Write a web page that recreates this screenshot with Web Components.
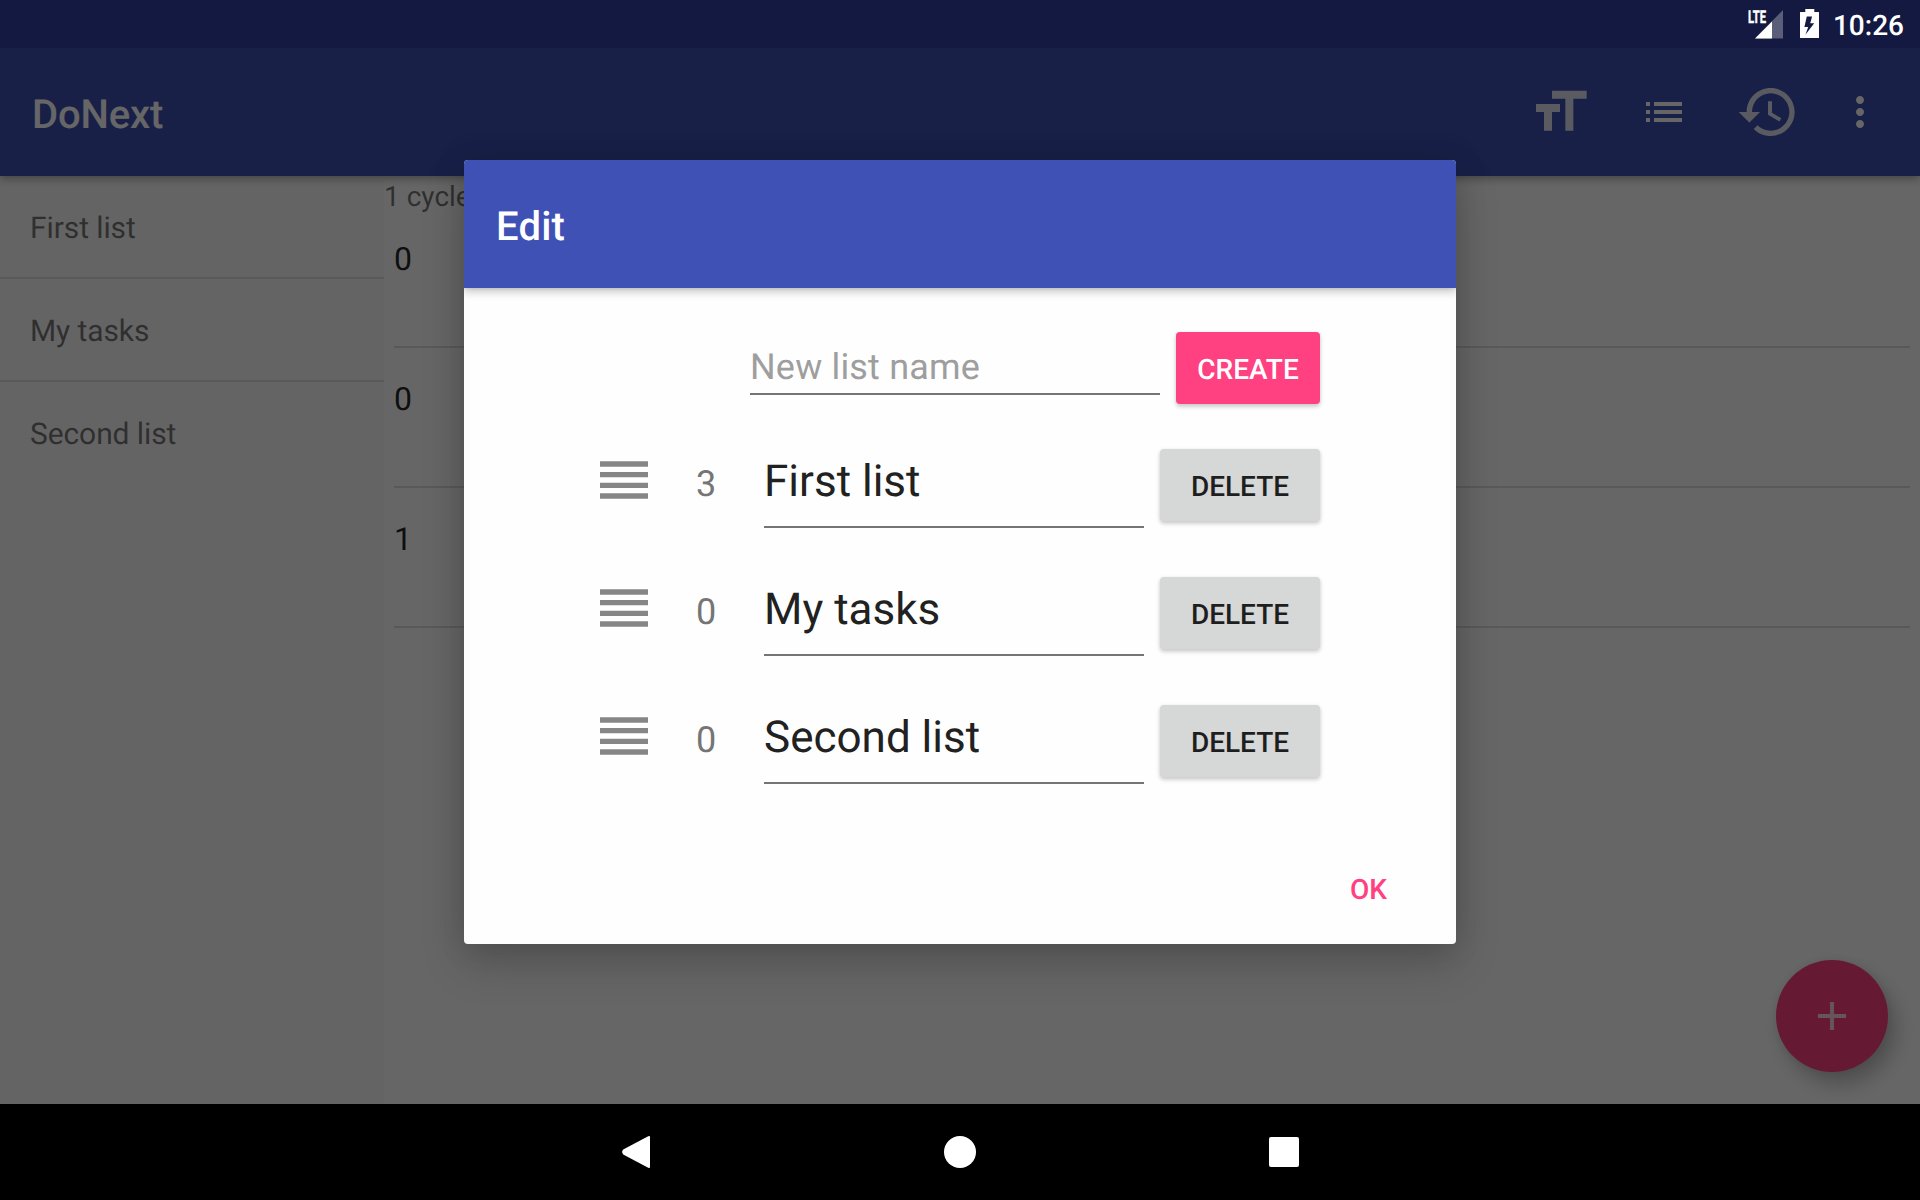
<!DOCTYPE html>
<html lang="en">
<head>
<meta charset="utf-8">
<title>DoNext</title>
<style>
html,body{margin:0;width:1920px;height:1200px;overflow:hidden;background:#000}
body{font-family:Roboto,"Noto Sans",sans-serif;text-rendering:geometricPrecision}
</style>
</head>
<body>
<donext-app></donext-app>
<script>
const define = (name, html) => {
  const template = document.createElement('template');
  template.innerHTML = html;
  customElements.define(name, class extends HTMLElement {
    constructor() {
      super();
      this.attachShadow({mode: 'open'}).append(template.content.cloneNode(true));
    }
  });
};

define('status-bar', `<style>
:host{display:flex;height:48px;box-sizing:border-box;justify-content:flex-end;align-items:flex-start;padding:0 16px 0 0;background:#131940;color:#fff}
svg{display:block;width:76px;height:48px;margin-right:13px}
span{font-size:28px;font-weight:500;line-height:48px;padding-top:2px}
</style>
<svg viewBox="0 0 76 48"><path d="M39 10v28.500H11z" fill="#fff" opacity=".3"/><path d="M28 21.500v17H11z" fill="#fff"/>
<text x="4" y="22.700" font-size="17.500" font-weight="700" fill="#fff" stroke="#fff" stroke-width=".5" textLength="18" lengthAdjust="spacingAndGlyphs">LTE</text>
<path fill="#fff" fill-rule="evenodd" d="M61.300 9h9v3H74.500a.5.5 0 0 1 .5.5v25a.5.5 0 0 1-.5.5h-18a.5.5 0 0 1-.5-.5v-25a.5.5 0 0 1 .5-.5h4.800zM62.800 16.500l-2.400 10.500h3.800L61.400 34.800l8.800-11.600h-4l1.900-6.700z"/></svg>
<span><slot></slot></span>`);

define('app-bar', `<style>
:host{display:flex;height:128px;box-sizing:border-box;align-items:center;padding:0 36px 0 32px;background:#3f51b5;color:#fff;position:relative;box-shadow:0 4px 8px rgba(0,0,0,.25),0 1px 3px rgba(0,0,0,.08);clip-path:inset(0 0 -20px 0)}
h1{margin:0;flex:1;font-size:40px;font-weight:500;line-height:47px;padding-top:5px;letter-spacing:-.15px}
svg{display:block;width:48px;height:48px;fill:#fff;margin-right:48px}
.big{width:64px;height:64px;opacity:.84}
.history{margin-right:36px}
.more{margin-right:0}
</style>
<h1><slot></slot></h1>
<svg class="big" viewBox="0 0 24 24"><path d="M9 4v3h5v12h3V7h5V4H9zm-6 8h3v7h3v-7h3V9H3v3z"/></svg>
<svg viewBox="0 0 24 24"><path d="M3 13h2v-2H3v2zm0 4h2v-2H3v2zm0-8h2V7H3v2zm4 4h14v-2H7v2zm0 4h14v-2H7v2zM7 7v2h14V7H7z"/></svg>
<svg class="big history" viewBox="0 0 24 24"><path d="M13 3c-4.970 0-9 4.030-9 9H1l3.890 3.890.070.140L9 12H6c0-3.870 3.130-7 7-7s7 3.130 7 7-3.130 7-7 7c-1.930 0-3.680-.790-4.940-2.060l-1.420 1.420C8.270 19.990 10.510 21 13 21c4.970 0 9-4.030 9-9s-4.030-9-9-9zm-1 5v5l4.280 2.540.720-1.210-3.500-2.080V8H12z"/></svg>
<svg class="more" viewBox="0 0 24 24"><path d="M12 8c1.100 0 2-.900 2-2s-.900-2-2-2-2 .900-2 2 .900 2 2 2zm0 2c-1.100 0-2 .900-2 2s.900 2 2 2 2-.900 2-2-.900-2-2-2zm0 6c-1.100 0-2 .900-2 2s.900 2 2 2 2-.900 2-2-.900-2-2-2z"/></svg>`);

define('side-item', `<style>
:host{display:block;height:101px;line-height:99px;padding:3px 0 0 30px;box-sizing:border-box;font-size:30px;letter-spacing:-.1px;color:rgba(0,0,0,.54)}
:host(:not(:last-child)){height:103px;border-bottom:2px solid #dedede}
</style><slot></slot>`);

define('task-row', `<style>
:host{display:block;height:140px;box-sizing:border-box;margin:0 10px;padding-top:32px;border-bottom:2px solid #dfdfdf;font-size:32px;line-height:38px;color:rgba(0,0,0,.87)}
</style><slot></slot>`);

define('fab-button', `<style>
:host{position:absolute;right:32px;bottom:32px;width:112px;height:112px;border-radius:50%;background:#ff4081;box-shadow:8px 12px 20px rgba(0,0,0,.24),0 0 8px rgba(0,0,0,.08)}
svg{display:block;width:112px;height:112px;fill:#fff;opacity:.76}
</style><svg viewBox="0 0 112 112"><path d="M54 42h4v12h12v4H58v12h-4V58H42v-4h12z"/></svg>`);

define('raised-button', `<style>
:host{display:flex;box-sizing:border-box;width:160px;height:72px;padding-top:3px;align-items:center;justify-content:center;border-radius:4px;background:#d6d7d7;color:#1e1e1e;font-size:28px;font-weight:500;line-height:33px;box-shadow:0 3px 4px rgba(0,0,0,.15),0 1px 4px rgba(0,0,0,.1)}
:host([primary]){width:144px;background:#ff4081;color:#fff}
</style><slot></slot>`);

define('list-row', `<style>
:host{display:flex;height:128px;align-items:flex-start}
svg{display:block;width:48px;height:38px;margin:40px 48px 0 0;fill:#868686}
.count{width:68px;margin-top:42px;font-size:36px;line-height:42px;color:#757575}
.name{box-sizing:border-box;width:380px;height:107px;padding-top:34px;border-bottom:2px solid #757575;font-size:44px;line-height:52px;color:#212121}
raised-button{margin:28px 0 0 16px}
</style>
<svg viewBox="0 0 48 38"><path d="M0 .330h48v5.330H0zM0 11h48v5.330H0zM0 21.670h48V27H0zM0 32.330h48v5.330H0z"/></svg>
<div class="count"><slot name="count"></slot></div>
<div class="name"><slot></slot></div>
<raised-button>DELETE</raised-button>`);

define('edit-dialog', `<style>
:host{display:flex;flex-direction:column;width:992px;height:784px;border-radius:4px;background:#fefefe;box-shadow:0 20px 44px rgba(0,0,0,.18),0 0 32px rgba(0,0,0,.13)}
header{box-sizing:border-box;height:128px;padding:5px 32px 0;border-radius:4px 4px 0 0;background:#3f51b5;color:#fff;display:flex;align-items:center;font-size:40px;font-weight:500;letter-spacing:.2px;box-shadow:0 4px 8px rgba(0,0,0,.22),0 1px 3px rgba(0,0,0,.08);clip-path:inset(0 0 -20px 0)}
.create{display:flex;height:72px;margin:44px 136px 17px 286px;gap:16px}
.input{box-sizing:border-box;width:410px;height:63px;padding-top:10px;line-height:51px;border-bottom:2px solid #757575;color:#9e9e9e;font-size:36px;letter-spacing:.18px}
.rows{padding-left:136px;flex:1}
footer{display:flex;justify-content:flex-end;height:72px;padding:0 69px 19px 0;align-items:center;color:#ff4081;font-size:28px;font-weight:500}
</style>
<header>Edit</header>
<div class="create"><div class="input">New list name</div><raised-button primary>CREATE</raised-button></div>
<div class="rows"><slot></slot></div>
<footer>OK</footer>`);

define('nav-bar', `<style>
:host{display:flex;height:96px;background:#000;justify-content:center;align-items:center;gap:276px}
svg{display:block;width:48px;height:48px;fill:#fff}
</style>
<svg viewBox="0 0 48 48"><path d="M36.200 8.300Q38 7.400 38 9.200V38.800Q38 40.600 36.200 39.700L11.200 26.400Q9 24 11.200 21.600z"/></svg>
<svg viewBox="0 0 48 48"><circle cx="24" cy="24" r="16"/></svg>
<svg viewBox="0 0 48 48"><rect x="9" y="9" width="30" height="30" rx="2"/></svg>`);

define('donext-app', `<style>
:host{display:flex;flex-direction:column;width:1920px;height:1200px}
.app{position:relative;height:1056px;display:flex;flex-direction:column;background:#fff}
.content{flex:1;display:flex}
aside{width:384px;background:#fafafa}
main{flex:1}
.cycle{height:32px;line-height:41px;font-size:28px;color:rgba(0,0,0,.54)}
.scrim{position:absolute;inset:0;background:rgba(0,0,0,.6);display:flex;justify-content:center;align-items:flex-start;padding-top:112px}
</style>
<status-bar>10:26</status-bar>
<div class="app">
  <app-bar>DoNext</app-bar>
  <div class="content">
    <aside><side-item>First list</side-item><side-item>My tasks</side-item><side-item>Second list</side-item></aside>
    <main><div class="cycle">1 cycle</div><task-row>0</task-row><task-row>0</task-row><task-row>1</task-row></main>
  </div>
  <fab-button></fab-button>
  <div class="scrim">
    <edit-dialog>
      <list-row><span slot="count">3</span>First list</list-row>
      <list-row><span slot="count">0</span>My tasks</list-row>
      <list-row><span slot="count">0</span>Second list</list-row>
    </edit-dialog>
  </div>
</div>
<nav-bar></nav-bar>`);
</script>
</body>
</html>
